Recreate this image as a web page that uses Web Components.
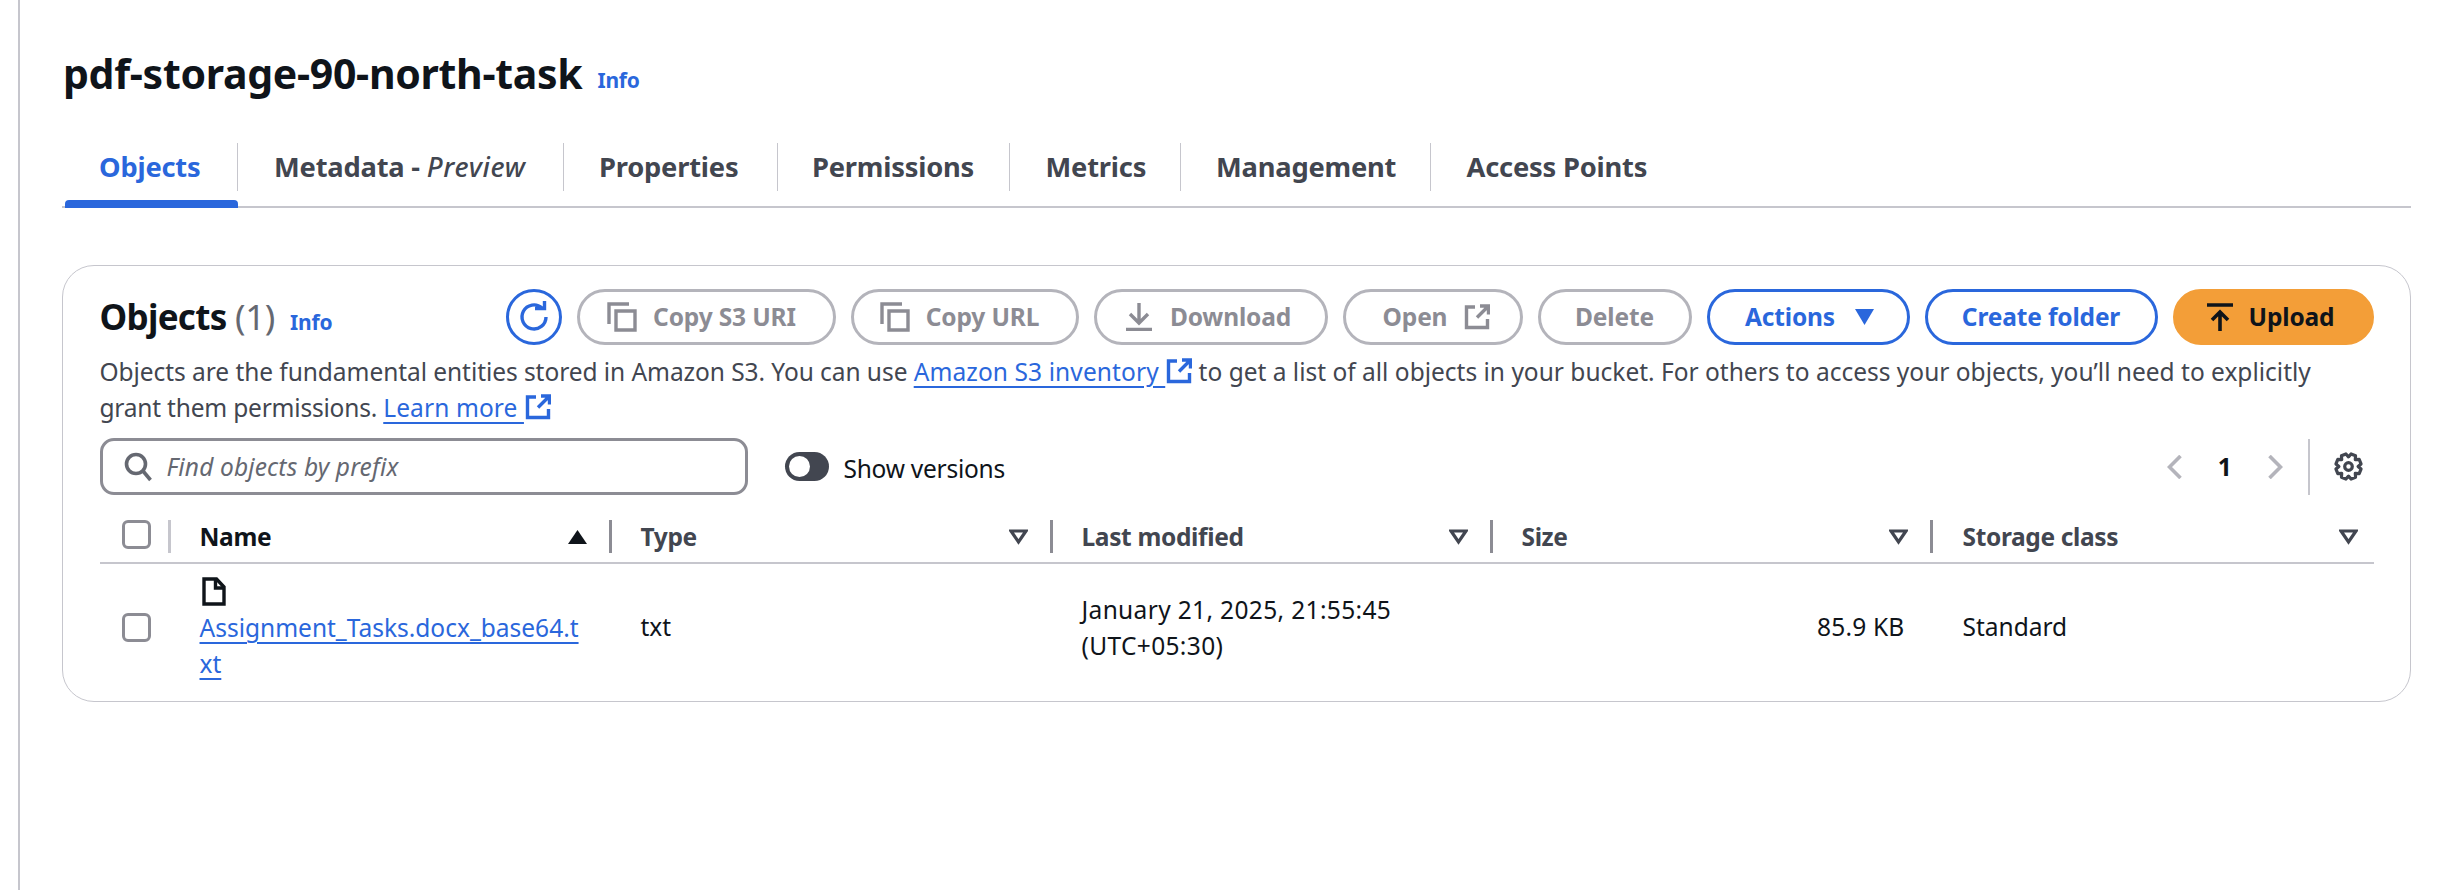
<!DOCTYPE html>
<html><head><meta charset="utf-8"><style>
html,body{margin:0;padding:0;background:#fff}
body{font-family:"Noto Sans",sans-serif;color:#0f141a;height:890px;overflow:hidden}
</style></head><body>
<s3-page>
  <s3-heading level="1" info>pdf-storage-90-north-task</s3-heading>
  <s3-tabs></s3-tabs>
  <s3-card>
    <s3-toolbar></s3-toolbar>
    <s3-desc></s3-desc>
    <s3-filterbar></s3-filterbar>
    <s3-table></s3-table>
  </s3-card>
</s3-page>
<script>
const FS=24.5;
const BLUE='#2a67dc';
const base=`:host{box-sizing:border-box}*{box-sizing:border-box}a{color:${BLUE};text-decoration:none}svg{display:block;flex:none}`;
const EXT=`<svg width="26" height="26" viewBox="0 0 26 26" fill="none" stroke="${BLUE}" stroke-width="3.4"><path d="M11 3H2.500v20.500h21V15"/><path d="M16 2h8.500v8.500M24 2.500 13 13.500"/></svg>`;
function gear(cx,cy,ro,ri,n){let p=[];const st=Math.PI*2/n;for(let i=0;i<n;i++){const a=i*st+st/2-Math.PI/2;[[-.27,ro],[.27,ro],[.5,ri]].forEach(([d,r],k)=>{const t=a+d*st*(k<2?.9:1);p.push((cx+r*Math.cos(t)).toFixed(2)+' '+(cy+r*Math.sin(t)).toFixed(2))});}return 'M'+p.join('L')+'Z'}
function def(name,html){customElements.define(name,class extends HTMLElement{constructor(){super();this.attachShadow({mode:'open'}).innerHTML=typeof html==='function'?html(this):html;}})}

def('s3-page',`<style>${base}:host{display:block;margin-left:18px;border-left:2px solid #c6c6cd;height:890px;padding:0 37px 0 42px;width:2430px}</style><slot></slot>`);

def('s3-heading',`<style>${base}:host{display:flex;align-items:baseline;height:143px;padding-top:49px;padding-left:1px}
.t{font-size:41px;font-weight:700;line-height:48px;letter-spacing:-.3px}
a{font-size:21px;font-weight:700;margin-left:15px;letter-spacing:-.2px;position:relative;top:-1px}</style><span class="t"><slot></slot></span><a>Info</a>`);

def('s3-tab',h=>`<style>${base}:host{display:flex;align-items:flex-start;height:65px;position:relative;width:${h.getAttribute('w')}px;padding-left:${h.getAttribute('p')}px;font-size:27.300px;font-weight:700;color:${h.hasAttribute('active')?BLUE:'#424650'};letter-spacing:-.2px}
.x{height:48px;display:flex;align-items:center;white-space:pre;position:relative;top:-1px}
.s{position:absolute;right:0;top:0;width:1.500px;height:48px;background:#c6c6cd}
.u{position:absolute;left:3px;right:0;bottom:0;height:8px;background:${BLUE};border-radius:4px 4px 0 0}
</style><span class="x"><slot></slot></span>${h.hasAttribute('last')?'':'<span class="s"></span>'}${h.hasAttribute('active')?'<span class="u"></span>':''}`);

def('s3-tabs',`<style>${base}:host{display:flex;height:65px;border-bottom:2px solid #c6c6cd;margin-bottom:57px}</style>
<s3-tab active w="176" p="37">Objects</s3-tab>
<s3-tab w="326" p="36">Metadata - <i style="font-weight:500;letter-spacing:.7px">Preview</i></s3-tab>
<s3-tab w="214" p="35">Properties</s3-tab>
<s3-tab w="232" p="34">Permissions</s3-tab>
<s3-tab w="171" p="35.500">Metrics</s3-tab>
<s3-tab w="250" p="35">Management</s3-tab>
<s3-tab last w="300" p="35.500">Access Points</s3-tab>`);

def('s3-card',`<style>${base}:host{display:block;width:2349px;height:437px;border:1.500px solid #c6c6cd;border-radius:32px;padding:22.500px 36.500px 0 36.500px;color:#424650;background:#fff}</style><slot></slot>`);

def('s3-btn',h=>{const k=h.getAttribute('kind')||'dis';const c={dis:['#b4b4bb','#8c8c94','#fff'],pri:[BLUE,BLUE,'#fff'],cta:['#f39e38','#0f141a','#f39e38']}[k];
return `<style>${base}:host{display:flex;align-items:center;justify-content:center;gap:${h.getAttribute('gap')||14}px;height:56px;width:${h.getAttribute('w')}px;padding:0 ${h.getAttribute('pr')||0}px 0 ${h.getAttribute('pl')||0}px;border:3px solid ${c[0]};border-radius:28px;background:${c[2]};color:${c[1]};font-size:${FS}px;font-weight:700;letter-spacing:-.15px}</style><slot name="b"></slot><span><slot></slot></span><slot name="a"></slot>`});

const COPY=`<svg slot="b" width="30" height="30" viewBox="0 0 30 30" fill="none" stroke="#8c8c94" stroke-width="3.4"><path d="M2 22V2h20"/><path d="M9 9h19v19H9z"/></svg>`;
def('s3-toolbar',`<style>${base}:host{display:flex;align-items:center;height:56px}
.h{font-size:35px;font-weight:700;color:#0f141a;letter-spacing:-.7px;white-space:pre;display:flex;align-items:baseline}
.c{font-weight:400;color:#656871;letter-spacing:-.3px}
a{font-size:21px;font-weight:700;margin-left:15px;letter-spacing:-.2px;position:relative}
.sp{flex:1}
.r{display:flex;gap:15px;align-items:center}
.ref{width:56px;height:56px;border:3px solid ${BLUE};border-radius:50%;display:flex;align-items:center;justify-content:center}
</style>
<div class="h"><span>Objects <span class="c">(1)</span></span><a>Info</a></div><div class="sp"></div>
<div class="r">
<div class="ref"><svg width="32" height="32" viewBox="0 0 32 32" fill="none" stroke="${BLUE}" stroke-width="3.4"><path d="M28 16A12 12 0 1 1 24 7"/><path d="M17 7.500h9.500V0"/></svg></div>
<s3-btn w="259" gap="16" pr="9">${COPY}Copy S3 URI</s3-btn>
<s3-btn w="228" gap="16" pr="10">${COPY}Copy URL</s3-btn>
<s3-btn w="234" gap="18" pr="4"><svg slot="b" width="26" height="28" viewBox="0 0 26 28" fill="none" stroke="#8c8c94" stroke-width="3.4"><path d="M13 0v19M4 11l9 9 9-9M0 26.500h26"/></svg>Download</s3-btn>
<s3-btn w="180" gap="17" pl="8">Open<svg slot="a" width="26" height="26" viewBox="0 0 26 26" fill="none" stroke="#8c8c94" stroke-width="3.4"><path d="M11 3H2.500v20.500h21V15"/><path d="M16 2h8.500v8.500M24 2.500 13 13.500"/></svg></s3-btn>
<s3-btn w="154">Delete</s3-btn>
<s3-btn w="203" kind="pri" gap="20" pl="3">Actions<svg slot="a" width="19" height="16" viewBox="0 0 19 16" fill="${BLUE}"><path d="M0 0h19L9.500 16z"/></svg></s3-btn>
<s3-btn w="233" kind="pri">Create folder</s3-btn>
<s3-btn w="201" kind="cta" gap="16" pr="5"><svg slot="b" width="26" height="28" viewBox="0 0 26 28" fill="none" stroke="#0f141a" stroke-width="3.6"><path d="M0 2h26M13 28V9M5 17l8-8 8 8"/></svg>Upload</s3-btn>
</div>`);

def('s3-ext',`<style>:host{display:inline-block}</style><slot></slot>`);
def('s3-desc',`<style>${base}:host{display:block;font-size:${FS}px;line-height:36px;height:72px;margin-top:9px;color:#424650;width:2240px}
a{text-decoration:underline;text-decoration-thickness:2px;text-underline-offset:5px;letter-spacing:.1px}
s3-ext{vertical-align:-3px;margin-left:1px}
.a{letter-spacing:-.06px}.b{letter-spacing:-.2px}
</style><span class="a">Objects are the fundamental entities stored in Amazon S3. You can use </span><a>Amazon S3 inventory&nbsp;</a><s3-ext>${EXT}</s3-ext> to get a list of all objects in your bucket. For others to access your objects, you’ll need to explicitly <span class="b">grant them permissions. </span><a>Learn more&nbsp;</a><s3-ext>${EXT}</s3-ext>`);

def('s3-filterbar',`<style>${base}:host{display:flex;align-items:center;height:58px;margin-top:12px;position:relative}
.in{width:648px;height:57px;border:3px solid #8c8c94;border-radius:14px;display:flex;align-items:center;padding-left:21px;gap:15px;font-style:italic;font-size:${FS}px;color:#656871}
.in span{letter-spacing:.15px}
.tg{width:44px;height:29px;border-radius:15px;background:#424650;margin-left:37px;padding:4px;position:relative}
.tg b{display:block;width:21px;height:21px;border-radius:50%;background:#fff}
.sv{margin-left:15px;font-size:${FS}px;color:#0f141a;position:relative;top:2px;letter-spacing:-.25px}
.sp{flex:1}
.pg{display:flex;align-items:center;height:58px}
.n{width:86.500px;text-align:center;font-size:${FS}px;font-weight:700;color:#0f141a}
.d{width:2px;height:56px;background:#c6c6cd;margin-left:25px;margin-right:23.500px}
</style>
<div class="in"><svg width="28" height="32" viewBox="0 0 28 32" fill="none" stroke="#656871" stroke-width="3.6"><circle cx="12" cy="13" r="9.500"/><path d="M19 20l7.500 9"/></svg><span>Find objects by prefix</span></div>
<div class="tg"><b></b></div><span class="sv">Show versions</span><div class="sp"></div>
<div class="pg"><svg width="15" height="24" viewBox="0 0 15 24" fill="none" stroke="#b4b4bb" stroke-width="3.6"><path d="M13.500 1 2.500 12l11 11"/></svg><span class="n">1</span><svg width="15" height="24" viewBox="0 0 15 24" fill="none" stroke="#b4b4bb" stroke-width="3.6"><path d="M1.500 1l11 11-11 11"/></svg>
<span class="d"></span>
<svg width="29" height="29" viewBox="0 0 29 29" fill="none" stroke="#424650" stroke-width="3.2" stroke-linejoin="round" style="margin-right:11px"><path d="${gear(14.5,14.5,12.8,9.6,8)}"/><circle cx="14.500" cy="14.500" r="3.800"/></svg></div>
</div>`);

def('s3-th',h=>{const t=h.getAttribute('i');const c=h.hasAttribute('strong')?'#0f141a':'#424650';
return `<style>${base}:host{display:flex;align-items:center;height:34px;padding-left:${h.getAttribute('p')||29}px;font-weight:700;font-size:${FS}px;color:${c};position:relative;letter-spacing:-.35px}
.sp{flex:1}.i{margin-right:${h.getAttribute('m')||25}px}
.s{position:absolute;right:0;top:0;width:3px;height:33px;background:#8c8c94}
</style><span class="l"><slot></slot></span><span class="sp"></span>${t==='up'?'<svg class="i" width="19" height="14" viewBox="0 0 19 14" fill="#0f141a"><path d="M9.500 0 19 14H0z"/></svg>':t==='dn'?'<svg class="i" width="19" height="16" viewBox="0 0 19 16" fill="none" stroke="#424650" stroke-width="3.2"><path d="M2 2h15L9.500 13z"/></svg>':''}${h.hasAttribute('last')?'':'<span class="s"></span>'}`});

const CB=`<span style="display:block;width:29px;height:29px;border:3.200px solid #8c8c94;border-radius:6px"></span>`;
def('s3-table',`<style>${base}:host{display:block;margin-top:24px;color:#0f141a;font-size:${FS}px}
.g{display:grid;grid-template-columns:71px 441px 441px 440px 440px 1fr}
.hd{height:44px;border-bottom:2px solid #c6c6cd;align-items:start}
.cb{padding-left:22.500px}
.hd .cb{position:relative}.hd .cb i{position:absolute;right:0;top:0;width:2.500px;height:33px;background:#c6c6cd}
.row{height:127px;align-items:center;line-height:36px}
.name{padding-left:29px;padding-right:30px;align-self:start;padding-top:13px}
.name svg{margin-left:2px;margin-bottom:4.500px}
a{text-decoration:underline;text-decoration-thickness:2px;text-underline-offset:5px;word-break:break-all}
.c{padding-left:29px}.c.l{padding-left:30px}.r{text-align:right;padding-right:28px;letter-spacing:.2px}
.lm{padding-left:29px;padding-right:60px;letter-spacing:.35px;position:relative;top:1px}
</style>
<div class="g hd"><div class="cb">${CB}<i></i></div>
<s3-th strong i="up">Name</s3-th><s3-th i="dn">Type</s3-th><s3-th i="dn">Last modified</s3-th><s3-th i="dn">Size</s3-th><s3-th i="dn" last m="16" p="30">Storage class</s3-th></div>
<div class="g row"><div class="cb">${CB}</div>
<div class="name"><svg width="24" height="29" viewBox="0 0 24 29" fill="none" stroke="#0f141a" stroke-width="3.4"><path d="M2 2h12.500l7.500 8v17H2z"/><path d="M13.500 2v9H22"/></svg><a>Assignment_Tasks.docx_base64.txt</a></div>
<div class="c">txt</div><div class="lm">January 21, 2025, 21:55:45 (UTC+05:30)</div><div class="r">85.9 KB</div><div class="c l">Standard</div></div>`);
</script></body></html>
